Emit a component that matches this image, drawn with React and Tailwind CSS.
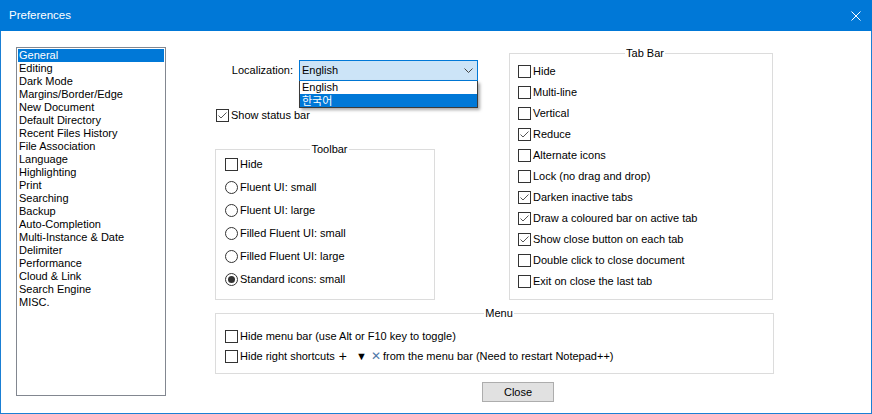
const pages = [
  'General', 'Editing', 'Dark Mode', 'Margins/Border/Edge', 'New Document', 'Default Directory',
  'Recent Files History', 'File Association', 'Language', 'Highlighting', 'Print', 'Searching',
  'Backup', 'Auto-Completion', 'Multi-Instance & Date', 'Delimiter', 'Performance', 'Cloud & Link',
  'Search Engine', 'MISC.',
]

const tabBar = [
  ['Hide', false], ['Multi-line', false], ['Vertical', false], ['Reduce', true],
  ['Alternate icons', false], ['Lock (no drag and drop)', false], ['Darken inactive tabs', true],
  ['Draw a coloured bar on active tab', true], ['Show close button on each tab', true],
  ['Double click to close document', false], ['Exit on close the last tab', false],
]

const toolbarRadios = [
  ['Fluent UI: small', false], ['Fluent UI: large', false], ['Filled Fluent UI: small', false],
  ['Filled Fluent UI: large', false], ['Standard icons: small', true],
]

function Check({ checked }) {
  return (
    <span className="w-[13px] h-[13px] border border-[#333] bg-white flex items-center justify-center shrink-0">
      {checked && (
        <svg width="11" height="11" viewBox="0 0 11 11">
          <path d="M1.5 5.5 L4 8 L9.5 2.5" fill="none" stroke="#555" strokeWidth="1" />
        </svg>
      )}
    </span>
  )
}

function Radio({ checked }) {
  return (
    <span className="w-[13px] h-[13px] rounded-full border border-[#333] bg-white flex items-center justify-center shrink-0">
      {checked && <span className="w-[7px] h-[7px] rounded-full bg-[#333]" />}
    </span>
  )
}

function Group({ title, className, children }) {
  return (
    <fieldset className={`border border-[#dcdcdc] ${className}`}>
      <legend className="mx-auto px-px h-[13px] leading-[13px]">{title}</legend>
      {children}
    </fieldset>
  )
}

export default function App() {
  return (
    <div className="w-[872px] h-[414px] bg-white text-[11px] text-black font-['Liberation_Sans',Arial,sans-serif] overflow-hidden">
      {/* title bar */}
      <div className="h-[31px] bg-[#0078d7] text-white flex items-center justify-between pl-[9px] pr-[11px]">
        <span className="text-[11.5px]">Preferences</span>
        <svg width="10" height="10" viewBox="0 0 10 10">
          <path d="M0.5 0.5 L9.5 9.5 M9.5 0.5 L0.5 9.5" stroke="#fff" strokeWidth="1" />
        </svg>
      </div>

      <div className="h-[383px] border-x border-b border-[#1a7fd4] flex pl-[15px] pt-[16px]">
        {/* page list */}
        <div className="w-[150px] h-[349px] border border-[#828790] p-px shrink-0">
          {pages.map((p, i) => (
            <div
              key={p}
              className={`h-[13px] leading-[13px] pl-px whitespace-nowrap ${i === 0 ? 'bg-[#0078d7] text-white' : ''}`}
            >
              {p}
            </div>
          ))}
        </div>

        <div className="ml-[49px] w-[559px] flex flex-col">
          <div className="flex">
            {/* left column */}
            <div className="w-[220px] flex flex-col shrink-0">
              <div className="mt-[13px] flex items-center h-[21px]">
                <span className="w-[78px] text-right shrink-0">Localization:</span>
                <div className="relative ml-[6px] shrink-0">
                  <div className="w-[179px] h-[21px] border border-[#0078d7] bg-[#cce4f7] flex items-center justify-between pl-[2px] pr-[4px]">
                    <span>English</span>
                    <svg width="9" height="5" viewBox="0 0 9 5">
                      <path d="M0.5 0.5 L4.5 4.5 L8.5 0.5" fill="none" stroke="#444" strokeWidth="1" />
                    </svg>
                  </div>
                  <div className="absolute left-0 top-full w-[179px] border-x border-b border-[#3a3a3a] bg-white shadow-[2px_2px_3px_rgba(0,0,0,0.35)] z-10">
                    <div className="h-[13px] leading-[13px] pl-[2px]">English</div>
                    <div className="h-[13px] leading-[13px] pl-[2px] bg-[#0078d7] text-white font-['Noto_Sans_CJK_KR',sans-serif]">
                      한국어
                    </div>
                  </div>
                </div>
              </div>

              <label className="mt-[28px] ml-px h-[13px] flex items-center gap-[2px]">
                <Check checked />
                <span>Show status bar</span>
              </label>

              <Group title="Toolbar" className="mt-[21px] h-[157px] pl-[9px]">
                <div className="h-[17px] flex items-center gap-[2px]">
                  <Check />
                  <span>Hide</span>
                </div>
                <div className="mt-[3px]">
                  {toolbarRadios.map(([t, c]) => (
                    <div key={t} className="h-[23px] flex items-center gap-[2px]">
                      <Radio checked={c} />
                      <span>{t}</span>
                    </div>
                  ))}
                </div>
              </Group>
            </div>

            {/* tab bar */}
            <Group title="Tab Bar" className="ml-[74px] w-[264px] h-[253px] pl-[8px] shrink-0">
              <div className="pt-px">
                {tabBar.map(([t, c]) => (
                  <div key={t} className="h-[21px] flex items-center gap-[2px]">
                    <Check checked={c} />
                    <span>{t}</span>
                  </div>
                ))}
              </div>
            </Group>
          </div>

          <Group title="Menu" className="mt-[7px] h-[67px] pl-[9px]">
            <div className="pt-[6px]">
              <div className="h-[20px] flex items-center gap-[2px]">
                <Check />
                <span>Hide menu bar (use Alt or F10 key to toggle)</span>
              </div>
              <div className="h-[20px] flex items-center gap-[2px]">
                <Check />
                <span className="whitespace-pre flex items-center">
                  Hide right shortcuts <span className="text-[14px] leading-[11px] mx-[1px]">+</span>
                  <span className="ml-[8px]">▼</span>
                  <span className="ml-[4px] text-[#4f79a8] font-['DejaVu_Sans',sans-serif] text-[12px] leading-[11px]">✕</span>
                  <span className="ml-[2px]">from the menu bar (Need to restart Notepad++)</span>
                </span>
              </div>
            </div>
          </Group>

          <button className="mt-[8px] ml-[267px] w-[72px] h-[20px] bg-[#e1e1e1] border border-[#adadad] leading-[18px]">
            Close
          </button>
        </div>
      </div>
    </div>
  )
}
